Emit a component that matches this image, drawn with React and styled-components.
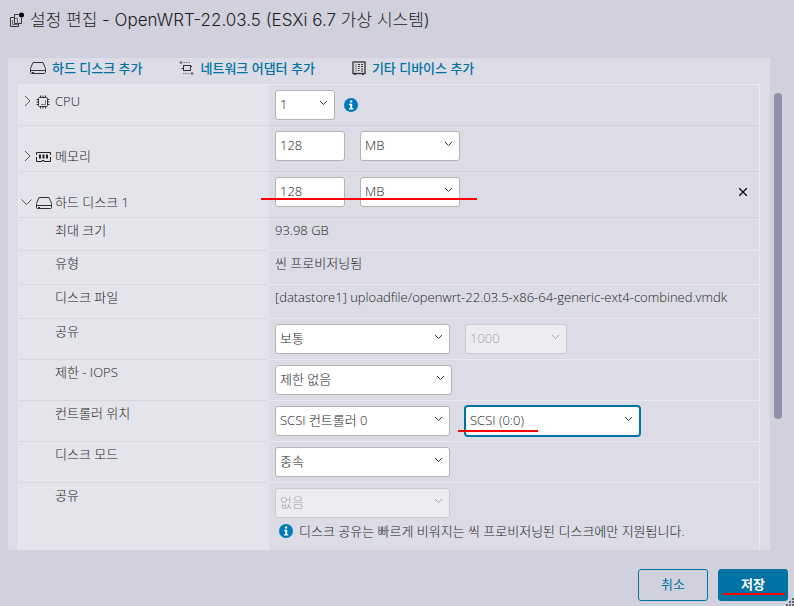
import React, { useState } from 'react';
import styled, { createGlobalStyle, css } from 'styled-components';

const initialForm = {
	cpu: '1',
	memory: '128',
	memoryUnit: 'MB',
	disk: '128',
	diskUnit: 'MB',
	shares: '보통',
	sharesValue: '1000',
	iops: '제한 없음',
	controller: 'SCSI 컨트롤러 0',
	node: 'SCSI (0:0)',
	mode: '종속',
	sharing: '없음',
};

const DiskIcon = () => (
	<svg width="16" height="14" viewBox="0 0 16 14" fill="none" stroke="#333">
		<path d="M3 1.500h10l2.500 6v4a1 1 0 0 1-1 1h-13a1 1 0 0 1-1-1v-4z" />
		<path d="M.5 9.500h15" />
		<path d="M2 11.500h2" />
	</svg>
);

const NetworkIcon = () => (
	<svg width="15" height="14" viewBox="0 0 15 14" fill="none" stroke="#333">
		<rect x="4.500" y="4.500" width="7" height="5" />
		<path d="M4 7.500H2.500M11 5.500h2" />
		<path d="M2 1.500h9M4 12.500h9" strokeDasharray="1.500 1" stroke="#777" />
		<path d="M2.500 0L1 1.500L2.500 3M12.500 11L14 12.500L12.500 14" />
	</svg>
);

const DeviceIcon = () => (
	<svg width="14" height="14" viewBox="0 0 14 14" fill="none" stroke="#333">
		<rect x="1" y="1" width="12" height="11.500" strokeWidth="1.300" />
		<path d="M4 3v8" stroke="#777" />
		<path d="M6 3.500h2M9 3.500h2M6 5.500h2M9 5.500h2M6 7.500h1.500M6 9.500h1.500M9 8h2M9 10h2M2 13.500h2M10 13.500h2" />
	</svg>
);

const CpuIcon = () => (
	<svg width="14" height="14" viewBox="0 0 14 14" fill="none" stroke="#333">
		<rect x="2.500" y="2.500" width="9" height="9" rx="1" />
		<path d="M9.500 5v4.500H5" stroke="#777" />
		<path d="M4.500 .5v2M7 .5v2M9.500 .5v2M4.500 11.500v2M7 11.500v2M9.500 11.500v2M.5 4.500h2M.5 7h2M.5 9.500h2M11.500 4.500h2M11.500 7h2M11.500 9.500h2" />
	</svg>
);

const MemoryIcon = () => (
	<svg width="15" height="12" viewBox="0 0 15 12" fill="none" stroke="#222">
		<path d="M.5 4V1.500h14V4M.5 6v4.500h5.500V9.500h2v1h6.500V6" />
		<path d="M4 3.500v4M7.500 3.500v4M11 3.500v4" strokeWidth="2" />
	</svg>
);

const VmIcon = () => (
	<svg width="15" height="16" viewBox="0 0 15 16" fill="none" stroke="#333">
		<path d="M9.500 2.500H5.500V11.500H12.500V6" />
		<path d="M5 5.500H1.500v9h8V12" />
		<path d="M3.500 8v4.500h5V6.500H6" stroke="#666" />
		<circle cx="12.500" cy="3" r="2.500" fill="#000" stroke="none" />
	</svg>
);

const InfoIcon = () => (
	<svg width="14" height="14" viewBox="0 0 14 14">
		<circle cx="7" cy="7" r="7" fill="#0079b8" />
		<path d="M6 2.500h2.200v2H6zM5 5.800h3.200v4.400H9.300v1.300H5v-1.300h1.200V7.100H5z" fill="#fff" />
	</svg>
);

const Caret = ({ open }) => (
	<svg width="12" height="12" viewBox="0 0 12 12" fill="none" stroke="#555">
		<path d={open ? 'M.5 3.500l5 5l5-5' : 'M4 1l5 5l-5 5'} />
	</svg>
);

const SelectField = ({ id, label, value, options, onChange, ...rest }) => (
	<SelectBox {...rest}>
		<Select
			id={id}
			name={id}
			aria-label={label}
			value={value}
			onChange={onChange}
			disabled={rest.$disabled}
			$active={rest.$active}
		>
			{options.map((o) => (
				<option key={o}>{o}</option>
			))}
		</Select>
		<svg width="9" height="6" viewBox="0 0 9 6" fill="none" stroke={rest.$disabled ? '#aaa' : '#333'}>
			<path d="M1 1l3.500 3.500l3.500-3.500" />
		</svg>
	</SelectBox>
);

const App = () => {
	const [form, setForm] = useState(initialForm);

	const handleChange = (e) => {
		const { name, value } = e.target;
		setForm({
			...form,
			[name]: value,
		});
	};

	const field = (name) => ({ id: name, value: form[name], onChange: handleChange });

	return (
		<Dialog>
			<GlobalStyle />
			<Header>
				<VmIcon />
				<Title>설정 편집 - OpenWRT-22.03.5 (ESXi 6.7 가상 시스템)</Title>
			</Header>

			<Body>
				<Panel>
					<Toolbar>
						<AddButton type="button">
							<DiskIcon />
							하드 디스크 추가
						</AddButton>
						<AddButton type="button">
							<NetworkIcon />
							네트워크 어댑터 추가
						</AddButton>
						<AddButton type="button">
							<DeviceIcon />
							기타 디바이스 추가
						</AddButton>
					</Toolbar>

					<Settings>
						<Row $height={41}>
							<Heading $top={6}>
								<Caret />
								<IconSlot><CpuIcon /></IconSlot>
								<label htmlFor="cpu">CPU</label>
							</Heading>
							<Value $strong $gap={9}>
								<SelectField {...field('cpu')} options={['1', '2', '4']} $width={60} />
								<InfoSlot><InfoIcon /></InfoSlot>
							</Value>
						</Row>
						<Row $height={46}>
							<Heading $top={20}>
								<Caret />
								<IconSlot><MemoryIcon /></IconSlot>
								<label htmlFor="memory">메모리</label>
							</Heading>
							<Value $strong>
								<Input {...field('memory')} name="memory" />
								<SelectField {...field('memoryUnit')} label="메모리 단위" options={['MB', 'GB']} $width={100} />
							</Value>
						</Row>
						<Row $height={46}>
							<Heading $top={20}>
								<Caret open />
								<IconSlot><DiskIcon /></IconSlot>
								<label htmlFor="disk">하드 디스크 1</label>
							</Heading>
							<Value $strong>
								<Input {...field('disk')} name="disk" />
								<SelectField {...field('diskUnit')} label="디스크 단위" options={['MB', 'GB']} $width={100} />
								<RemoveButton type="button" aria-label="제거">
									<svg width="8" height="8" viewBox="0 0 8 8" stroke="#111" strokeWidth="1.300">
										<path d="M0 0l8 8M8 0l-8 8" />
									</svg>
								</RemoveButton>
								<Mark $left={-8} $top={26} $width={216} />
							</Value>
						</Row>
						<Row $height={33}>
							<SubLabel as="div">최대 크기</SubLabel>
							<TextValue>93.98 GB</TextValue>
						</Row>
						<Row $height={34}>
							<SubLabel as="div">유형</SubLabel>
							<TextValue>씬 프로비저닝됨</TextValue>
						</Row>
						<Row $height={34}>
							<SubLabel as="div">디스크 파일</SubLabel>
							<TextValue>[datastore1] uploadfile/openwrt-22.03.5-x86-64-generic-ext4-combined.vmdk</TextValue>
						</Row>
						<Row $height={41}>
							<SubLabel htmlFor="shares">공유</SubLabel>
							<Value>
								<SelectField {...field('shares')} options={['낮음', '보통', '높음']} $width={175} />
								<SelectField {...field('sharesValue')} label="공유 값" options={['1000']} $width={102} $disabled />
							</Value>
						</Row>
						<Row $height={41}>
							<SubLabel htmlFor="iops">제한 - IOPS</SubLabel>
							<Value>
								<SelectField {...field('iops')} options={['제한 없음']} $width={177} />
							</Value>
						</Row>
						<Row $height={41}>
							<SubLabel htmlFor="controller">컨트롤러 위치</SubLabel>
							<Value>
								<SelectField {...field('controller')} options={['SCSI 컨트롤러 0', 'IDE 0']} $width={175} />
								<SelectField {...field('node')} label="SCSI 노드" options={['SCSI (0:0)', 'SCSI (0:1)']} $width={175} $active />
								<Mark $left={189} $top={29} $width={80} />
							</Value>
						</Row>
						<Row $height={41}>
							<SubLabel htmlFor="mode">디스크 모드</SubLabel>
							<Value>
								<SelectField {...field('mode')} options={['종속', '독립']} $width={175} />
							</Value>
						</Row>
						<Row>
							<SubLabel htmlFor="sharing">공유</SubLabel>
							<Value $stacked $gap={3}>
								<SelectField {...field('sharing')} options={['없음']} $width={175} $disabled />
								<Note>
									<InfoIcon />
									디스크 공유는 빠르게 비워지는 씩 프로비저닝된 디스크에만 지원됩니다.
								</Note>
							</Value>
						</Row>
					</Settings>
				</Panel>
				<ScrollTrack>
					<ScrollThumb />
				</ScrollTrack>
			</Body>

			<Footer>
				<Button type="button">취소</Button>
				<Button type="button" $primary>
					저장
					<Mark $left={4} $top={23} $width={62} />
				</Button>
			</Footer>
			<Grip width="8" height="8" viewBox="0 0 8 8" fill="#666">
				<path d="M6 0h2v2h-2zM3 3h2v2h-2zM6 3h2v2h-2zM0 6h2v2h-2zM3 6h2v2h-2zM6 6h2v2h-2z" />
			</Grip>
		</Dialog>
	);
};

export default App;

const GlobalStyle = createGlobalStyle`
	* {
		box-sizing: border-box;
	}

	body {
		margin: 0;
		background: #d1d1dd;
		color: #1c1c1c;
		font: 300 13px/20px 'Open Sans', 'Noto Sans CJK KR', sans-serif;
	}

	button, input, select {
		font: inherit;
		color: inherit;
	}

	svg {
		flex: none;
		display: block;
	}
`;

const Dialog = styled.div`
	position: relative;
	height: 100vh;
	display: flex;
	flex-direction: column;
`;

const Header = styled.header`
	display: flex;
	align-items: center;
	gap: 6px;
	height: 58px;
	padding: 0 9px 19px;
`;

const Title = styled.h1`
	margin: 0;
	font-family: Inter, 'Noto Sans CJK KR', sans-serif;
	font-size: 17px;
	line-height: 24px;
	font-weight: 300;
	white-space: nowrap;
`;

const Body = styled.main`
	flex: 1;
	min-height: 0;
	display: flex;
	gap: 4px;
	padding: 0 12px 0 8px;
`;

const Panel = styled.section`
	flex: 1;
	min-width: 0;
	display: flex;
	flex-direction: column;
	padding: 0 10px;
	background: #dcdce6;
	overflow: hidden;
`;

const Toolbar = styled.div`
	display: flex;
	align-items: center;
	gap: 37px;
	height: 26px;
	padding: 0 12px 6px;
`;

const AddButton = styled.button`
	display: flex;
	align-items: center;
	gap: 6px;
	padding: 0;
	border: 0;
	background: none;
	color: #0072a3;
	font-weight: 500;
	white-space: nowrap;
`;

const Settings = styled.div`
	flex: 1;
	display: flex;
	flex-direction: column;
	border: solid #e8e8ef;
	border-width: 1px 1px 0;
`;

const Row = styled.div`
	display: grid;
	grid-template-columns: 250px 1fr;
	${({ $height }) => ($height ? `height: ${$height}px;` : 'flex: 1;')}
	flex-shrink: 0;

	&:last-child > * {
		border-bottom: 0;
	}
`;

const labelCell = css`
	background: #e4e5eb;
	border-bottom: 1px solid #d6d6de;
`;

const Heading = styled.div`
	${labelCell}
	display: flex;
	align-items: flex-start;
	padding: ${({ $top }) => $top}px 0 0 2px;

	> svg {
		margin-top: 4px;
	}
`;

const IconSlot = styled.span`
	display: flex;
	align-items: center;
	width: 22px;
	height: 22px;
	padding-left: 3px;
`;

const SubLabel = styled.label`
	${labelCell}
	padding: 2px 0 0 36px;
`;

const Value = styled.div`
	position: relative;
	display: flex;
	flex-direction: ${({ $stacked }) => ($stacked ? 'column' : 'row')};
	align-items: flex-start;
	gap: ${({ $gap = 15 }) => $gap}px;
	padding: 5px 6px 0;
	border-bottom: 1px solid ${({ $strong }) => ($strong ? '#cfcfda' : '#e8e8ef')};
`;

const InfoSlot = styled.span`
	display: flex;
	align-items: center;
	height: 30px;
`;

const TextValue = styled.div`
	padding: 2px 6px 0;
	border-bottom: 1px solid #e8e8ef;
	white-space: nowrap;
`;

const SelectBox = styled.span`
	position: relative;
	flex: none;
	width: ${({ $width }) => $width}px;
	height: 30px;

	svg {
		position: absolute;
		top: 10px;
		right: 7px;
		pointer-events: none;
	}
`;

const control = css`
	height: 30px;
	padding: 0 4px 2px;
	border: 1px solid #b3b3b3;
	border-radius: 3px;
	background: #fff;
`;

const Select = styled.select`
	${control}
	display: block;
	appearance: none;
	width: 100%;

	${({ $active }) =>
		$active &&
		css`
			border-color: #0072a3;
			box-shadow: 0 0 0 1px #0072a3;
		`}

	&:disabled {
		border-color: #ccc;
		background: #ededf1;
		color: #a0a0a4;
		opacity: 1;
	}
`;

const Input = styled.input`
	${control}
	width: 70px;
`;

const RemoveButton = styled.button`
	margin-left: auto;
	padding: 11px 6px;
	border: 0;
	background: none;
`;

const Note = styled.p`
	display: flex;
	align-items: center;
	gap: 6px;
	margin: 0;
	padding-left: 4px;
	white-space: nowrap;
`;

const Mark = styled.span`
	position: absolute;
	left: ${({ $left }) => $left}px;
	top: ${({ $top }) => $top}px;
	width: ${({ $width }) => $width}px;
	height: 2px;
	background: #f00;
`;

const ScrollTrack = styled.div`
	width: 8px;
	padding-top: 35px;
`;

const ScrollThumb = styled.div`
	height: 326px;
	border-radius: 4px;
	background: #908fa9;
`;

const Footer = styled.footer`
	display: flex;
	justify-content: flex-end;
	gap: 10px;
	padding: 19px 6px 5px;
`;

const Button = styled.button`
	position: relative;
	width: 70px;
	height: 32px;
	padding: 0 0 2px;
	border: 1px solid #0072a3;
	border-radius: 3px;
	background: ${({ $primary }) => ($primary ? '#0072a3' : 'transparent')};
	color: ${({ $primary }) => ($primary ? '#fff' : '#0072a3')};
	font-weight: ${({ $primary }) => ($primary ? 700 : 400)};
`;

const Grip = styled.svg`
	position: absolute;
	right: 0;
	bottom: 0;
`;
